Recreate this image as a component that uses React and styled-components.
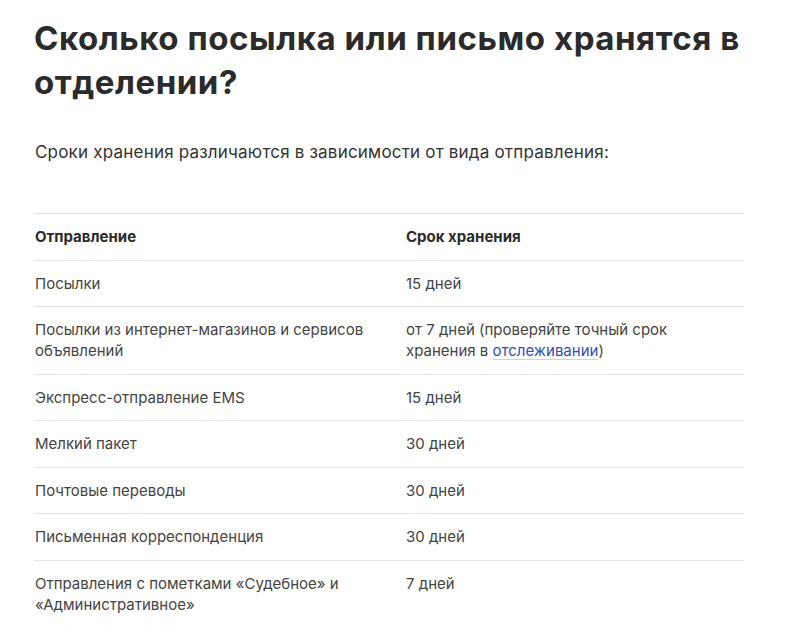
import React from 'react'
import styled, { createGlobalStyle } from 'styled-components'

const GlobalStyle = createGlobalStyle`
    body {
        margin: 0;
        background: #fff;
        font-family: Inter, "Noto Sans", sans-serif;
    }
`

const Page = styled.div`
    width: 710px;
    padding: 16px 0 0 34px;
    color: #333;
`

const Title = styled.h1`
    margin: 0;
    font-size: 33px;
    line-height: 44px;
    font-weight: 700;
    color: #2b2b2b;
    letter-spacing: 0.55px;
    padding-right: 0;
`

const Lead = styled.p`
    margin: 36px 0 0 1px;
    font-size: 17px;
    line-height: 24px;
    letter-spacing: 0.2px;
    color: #333;
`

const Table = styled.div`
    margin-top: 49px;
    border-top: 1px solid #e3e3e3;
`

const Row = styled.div`
    display: grid;
    grid-template-columns: 371px 1fr;
    border-bottom: ${(p) => (p.$last ? 'none' : '1px solid #e3e3e3')};
`

const Cell = styled.div`
    padding: 12px 24px 12.5px 1px;
    font-size: 15px;
    line-height: 21px;
    color: #444;
`

const HeadCell = styled(Cell)`
    font-weight: 700;
    color: #2b2b2b;
`

const Link = styled.a`
    color: #2b4fb8;
    text-decoration: underline;
    text-decoration-color: #c9d3ee;
    text-underline-offset: 3px;
`

const rows = [
    { kind: 'Посылки', term: '15 дней' },
    {
        kind: 'Посылки из интернет-магазинов и сервисов объявлений',
        term: (
            <>
                от 7 дней (проверяйте точный срок хранения в <Link href="#">отслеживании</Link>)
            </>
        ),
    },
    { kind: 'Экспресс-отправление EMS', term: '15 дней' },
    { kind: 'Мелкий пакет', term: '30 дней' },
    { kind: 'Почтовые переводы', term: '30 дней' },
    { kind: 'Письменная корреспонденция', term: '30 дней' },
    { kind: 'Отправления с пометками «Судебное» и «Административное»', term: '7 дней' },
]

export default function App() {
    return (
        <Page>
            <GlobalStyle />
            <Title>Сколько посылка или письмо хранятся в отделении?</Title>
            <Lead>Сроки хранения различаются в зависимости от вида отправления:</Lead>
            <Table>
                <Row>
                    <HeadCell>Отправление</HeadCell>
                    <HeadCell>Срок хранения</HeadCell>
                </Row>
                {rows.map((r, i) => (
                    <Row key={i} $last={i === rows.length - 1}>
                        <Cell>{r.kind}</Cell>
                        <Cell>{r.term}</Cell>
                    </Row>
                ))}
            </Table>
        </Page>
    )
}
